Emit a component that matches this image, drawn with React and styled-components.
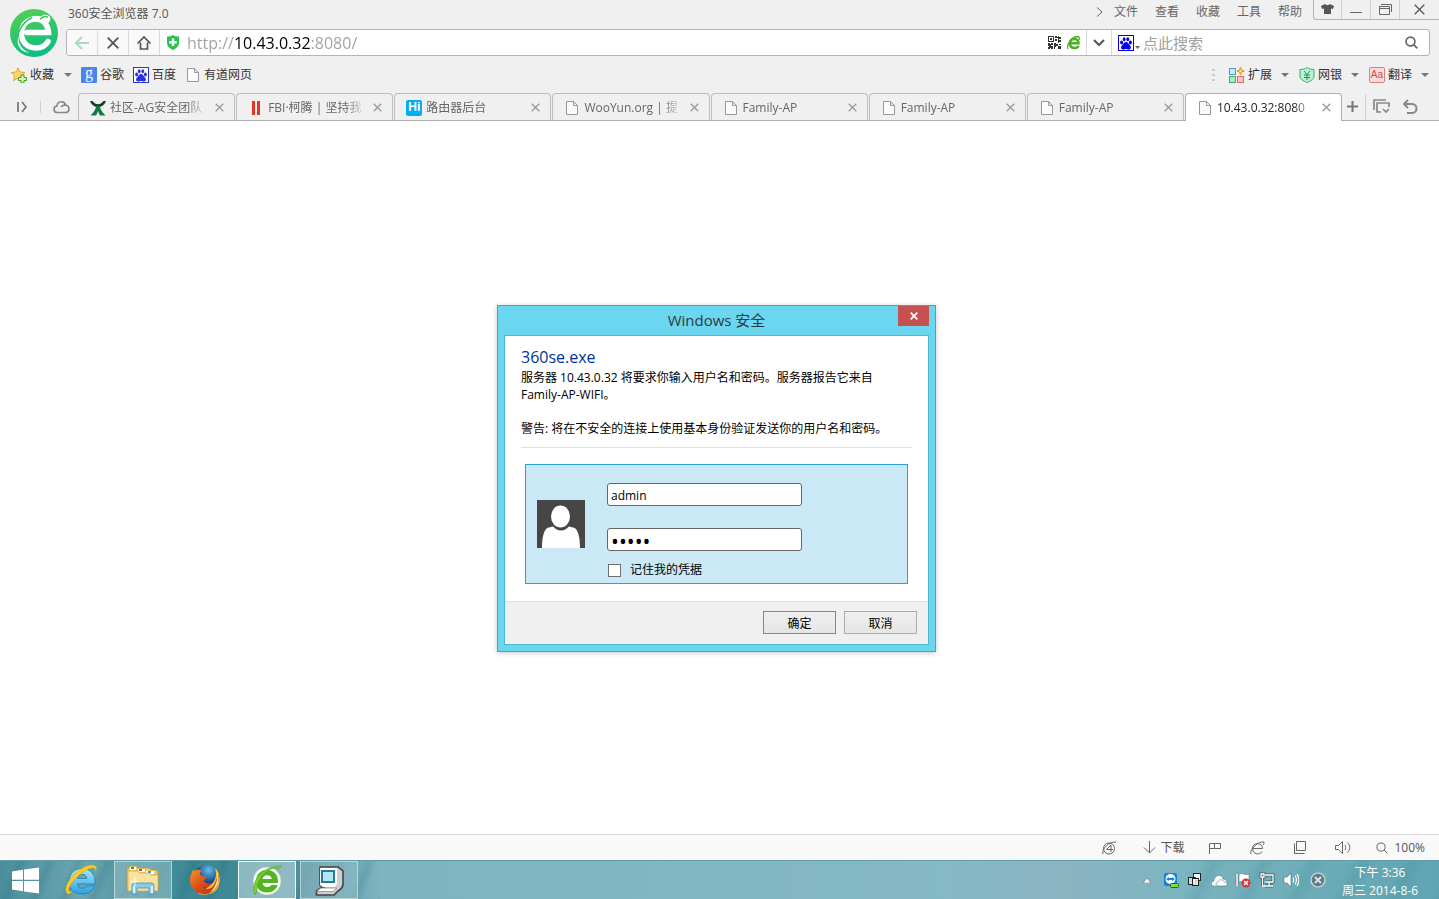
import React from "react";
import styled, { createGlobalStyle, css } from "styled-components";

const GlobalStyle = createGlobalStyle`
  *, *::before, *::after { box-sizing: border-box; }
  body {
    margin: 0;
    background: #fff;
    color: #000;
    font: 12px/16px "Open Sans", "Noto Sans CJK SC", sans-serif;
  }
  button, input {
    margin: 0;
    padding: 0;
    border: 0;
    background: none;
    color: inherit;
    font: inherit;
  }
  a { color: inherit; text-decoration: none; }
  svg { display: block; flex: none; }
`;

const Window = styled.div`
  display: flex;
  flex-direction: column;
  min-height: 100vh;
`;

/* ---------- browser header ---------- */

const Header = styled.header`
  background: #f0f0f0;
  color: #555;
`;

const HeaderTop = styled.div`
  display: flex;
`;

const LogoButton = styled.button`
  flex: none;
  width: 66px;
  height: 56px;
  padding: 9px 0 0 10px;
`;

const HeaderMain = styled.div`
  flex: 1;
  min-width: 0;
`;

const TitleRow = styled.div`
  display: flex;
  align-items: flex-start;
  height: 29px;
`;

const AppTitle = styled.span`
  flex: 1;
  padding: 6px 2px 0;
`;

const MenuBar = styled.nav`
  display: flex;
  align-items: center;
  gap: 17px;
  height: 24px;
  padding-right: 11px;
  color: #666;
`;

const MoreButton = styled.button`
  margin-right: -6px;
`;

const WindowButtons = styled.div`
  display: flex;
  height: 20px;
  border: 1px solid #b4b4b4;
  border-width: 0 0 1px 1px;
  border-radius: 0 0 0 3px;
`;

const WindowButton = styled.button`
  display: grid;
  place-items: center;
  width: ${(p) => p.$width}px;
  border-right: 1px solid #d0d0d0;
  &:last-child { border-right: 0; }
`;

const AddressBar = styled.div`
  display: flex;
  height: 27px;
  margin-right: 9px;
  overflow: hidden;
  background: #fff;
  border: 1px solid #b4b4b4;
  border-radius: 3px;
`;

const NavButton = styled.button`
  display: grid;
  place-items: center;
  width: 31px;
  background: #f9f9f9;
  border-right: 1px solid #dadada;
`;

const AddressField = styled.label`
  display: flex;
  flex: 1;
  align-items: center;
  gap: 7px;
  min-width: 0;
  padding-left: 6px;
`;

const AddressInput = styled.input`
  flex: 1;
  min-width: 0;
  height: 25px;
  font-size: 16px;
  outline: none;
  color: transparent;
  background: linear-gradient(90deg, #a0a0a0 47px, #000 47px, #000 123px, #a0a0a0 123px);
  background-clip: text;
  -webkit-background-clip: text;
`;

const AddressTools = styled.div`
  display: flex;
  align-items: center;
  gap: 6px;
  padding-right: 5px;
`;

const DropButton = styled.button`
  display: grid;
  place-items: center;
  width: 26px;
  border: 1px solid #dadada;
  border-width: 0 1px;
`;

const SearchBox = styled.form`
  display: flex;
  align-items: center;
  width: 317px;
  padding: 0 11px 0 6px;
`;

const SearchInput = styled.input`
  flex: 1;
  min-width: 0;
  height: 25px;
  padding-left: 3px;
  font-size: 15px;
  outline: none;
  &::placeholder { color: #a0a0a0; opacity: 1; }
`;

const Bookmarks = styled.nav`
  display: flex;
  align-items: center;
  height: 37px;
  padding: 0 10px 0 11px;
  color: #333;
`;

const Bookmark = styled.a`
  display: flex;
  align-items: center;
  gap: 3px;
  margin-right: 9px;
`;

const Grip = styled.span`
  margin-right: 3px;
`;

const Extension = styled.button`
  display: flex;
  align-items: center;
  gap: 3px;
  margin-left: 10px;
`;

const CaretBox = styled.span`
  margin-left: ${(p) => p.$gap || 6}px;
`;

const Spacer = styled.span`
  flex: 1;
`;

const TabRow = styled.div`
  display: flex;
  height: 28px;
  border-bottom: 1px solid #adadad;
`;

const TabRowTools = styled.div`
  display: flex;
  align-items: center;
  flex: none;
  width: ${(p) => p.$width}px;
  padding-left: ${(p) => p.$inset}px;
  gap: ${(p) => p.$gap}px;
`;

const Divider = styled.span`
  width: 1px;
  height: ${(p) => p.$height}px;
  background: #d0d0d0;
`;

const TabList = styled.div`
  display: flex;
  flex: 1;
  gap: 1px;
  min-width: 0;
`;

const Tab = styled.div`
  display: flex;
  flex: 1;
  align-items: center;
  min-width: 0;
  padding: 1px 9px 0 11px;
  border: 1px solid #bdbdbd;
  border-bottom: 0;
  border-radius: 4px 4px 0 0;
  color: #666;
  ${(p) => p.$active && css`
    margin-bottom: -1px;
    padding-bottom: 1px;
    background: #fff;
    border-color: #adadad;
    color: #222;
  `}
`;

const TabButton = styled.button`
  display: flex;
  flex: 1;
  align-items: center;
  gap: 4px;
  min-width: 0;
  height: 26px;
`;

const TabIcon = styled.span`
  display: grid;
  place-items: center;
  flex: none;
  width: 16px;
  height: 16px;
`;

const TabText = styled.span`
  flex: 1;
  overflow: hidden;
  text-align: left;
  white-space: nowrap;
  mask-image: linear-gradient(90deg, #000 80%, rgba(0, 0, 0, 0.15));
`;

const TabClose = styled.button`
  display: grid;
  place-items: center;
  width: 11px;
  height: 16px;
  margin-left: 9px;
`;

const HiIcon = styled.span`
  display: block;
  width: 16px;
  height: 16px;
  border-radius: 2px;
  background: #00aff0;
  color: #fff;
  font: bold 12px/15px "Liberation Sans", sans-serif;
  text-align: center;
`;

const GoogleIcon = styled.span`
  display: block;
  width: 16px;
  height: 16px;
  border-radius: 1px;
  background: #4a84ee;
  color: #fff;
  font: 16px/12px "Liberation Serif", serif;
  text-align: center;
`;

const AaIcon = styled.span`
  display: block;
  width: 16px;
  height: 16px;
  border: 1px solid #d88080;
  border-radius: 2px;
  background: #fbdcdc;
  color: #d04848;
  font: 10px/14px "Liberation Sans", sans-serif;
  text-align: center;
`;

/* ---------- page and dialog ---------- */

const Page = styled.main`
  display: grid;
  flex: 1;
  place-items: center;
  padding: 2px 6px 0 0;
  background: #fff;
`;

const Dialog = styled.section`
  width: 439px;
  padding: 0 6px 6px;
  background: #6ad6ef;
  border: 1px solid #48a5b8;
  box-shadow: 0 1px 5px rgba(0, 0, 0, 0.22);
`;

const DialogTitleBar = styled.div`
  display: grid;
  grid-template-columns: 31px 1fr 31px;
  height: 29px;
`;

const DialogTitle = styled.h1`
  grid-column: 2;
  margin: 0;
  color: #2b3c40;
  font-size: 15px;
  font-weight: 400;
  line-height: 29px;
  text-align: center;
`;

const DialogClose = styled.button`
  display: grid;
  place-items: center;
  height: 20px;
  background: #c75050;
`;

const DialogForm = styled.form`
  background: #fff;
  border: 1px solid #52b5c8;
`;

const DialogBody = styled.div`
  padding: 10px 16px 17px;
`;

const AppName = styled.h2`
  margin: 0 0 1px;
  color: #003399;
  font-size: 16px;
  font-weight: 400;
  line-height: 22px;
`;

const Message = styled.p`
  margin: 0 0 17px;
  line-height: 17px;
`;

const Credentials = styled.div`
  display: flex;
  gap: 22px;
  margin: 16px 4px 0;
  padding: 18px 11px 5px;
  background: #cbe8f6;
  border: 1px solid #26a0da;
`;

const Rule = styled.hr`
  height: 1px;
  margin: -7px 0 0;
  border: 0;
  background: #dfdfdf;
`;

const AvatarBox = styled.div`
  padding-top: 17px;
`;

const Fields = styled.div`
  display: flex;
  flex-direction: column;
`;

const TextField = styled.input`
  width: 195px;
  height: 23px;
  margin-bottom: ${(p) => p.$after}px;
  padding: 2px 3px 0;
  background: #fff;
  border: 1px solid #666;
  border-radius: 3px;
  outline: none;
  &[type="password"] { font-size: 21px; }
`;

const Remember = styled.label`
  display: flex;
  align-items: center;
  gap: 9px;
  padding-left: 1px;
`;

const CheckBox = styled.input`
  appearance: none;
  width: 13px;
  height: 13px;
  background: #fff;
  border: 1px solid #707070;
`;

const DialogFooter = styled.div`
  display: flex;
  justify-content: flex-end;
  gap: 8px;
  padding: 9px 11px 10px;
  background: #f0f0f0;
  border-top: 1px solid #dfdfdf;
`;

const DialogButton = styled.button`
  width: 73px;
  height: 23px;
  padding-top: 2px;
  background: linear-gradient(#f0f0f0, #e5e5e5);
  border: 1px solid ${(p) => (p.$primary ? "#3399ff" : "#acacac")};
`;

/* ---------- status bar and task bar ---------- */

const StatusBar = styled.footer`
  display: flex;
  align-items: center;
  justify-content: flex-end;
  height: 26px;
  padding-right: 14px;
  background: #f9f9f9;
  border-top: 1px solid #dadada;
  color: #555;
`;

const StatusItem = styled.button`
  display: flex;
  align-items: center;
  gap: 4px;
  margin-left: ${(p) => p.$gap || 28}px;
`;

const TaskBar = styled.footer`
  display: flex;
  align-items: stretch;
  height: 39px;
  border-top: 1px solid #5f9ba8;
  color: #fff;
  background:
    repeating-linear-gradient(112deg, transparent 0 12px, rgba(20, 85, 98, 0.14) 19px, transparent 27px) 0 0 / 380px 100% no-repeat,
    repeating-linear-gradient(118deg, transparent 0 20px, rgba(35, 120, 135, 0.14) 32px, transparent 44px) 100% 0 / 260px 100% no-repeat,
    linear-gradient(90deg, #4a8e9b 0, #6aa5b1 80px, #3b8794 190px, #3f8996 230px, #528f9d 300px, #7db4c0 380px, #84b9c5 66%, #8cb4c3 74%, #7cb4bf 82%, #5fa5b2);
`;

const TaskButton = styled.button`
  display: grid;
  place-items: center;
  width: ${(p) => p.$width || 58}px;
  margin-right: ${(p) => p.$after || 0}px;
  ${(p) => p.$open && css`
    background: rgba(150, 192, 201, 0.55);
    border: 1px solid rgba(210, 232, 236, 0.65);
  `}
  ${(p) => p.$current && css`
    background: rgba(185, 215, 221, 0.62);
    border-color: #f4fbfc;
  `}
`;

const Tray = styled.div`
  display: flex;
  align-items: center;
  margin-left: auto;
`;

const TrayButton = styled.button`
  display: grid;
  place-items: center;
  width: 24px;
  height: 24px;
  margin-left: ${(p) => p.$gap || 0}px;
`;

const Clock = styled.time`
  width: 100px;
  margin-right: 9px;
  padding-top: 3px;
  line-height: 18px;
  text-align: center;
`;

const ClockLine = styled.span`
  display: block;
`;

/* ---------- icons ---------- */

const Icon = ({ w = 16, h = w, stroke = "#666", sw = 1, children }) => (
  <svg width={w} height={h} viewBox={`0 0 ${w} ${h}`} fill="none" stroke={stroke} strokeWidth={sw} aria-hidden="true">
    {children}
  </svg>
);

const Caret = () => (
  <Icon w={8} h={4} stroke="none"><path d="M0 0h8L4 4z" fill="#777" /></Icon>
);

const LogoIcon = () => (
  <Icon w={48} stroke="none">
    <defs>
      <linearGradient id="logo" x1="0.3" y1="0" x2="0.6" y2="1">
        <stop offset="0" stopColor="#52cf52" />
        <stop offset="1" stopColor="#0bbd8b" />
      </linearGradient>
    </defs>
    <circle cx="24" cy="24" r="24" fill="url(#logo)" />
    <path d="M17 23.500h21.500C38 15 32.500 10 26 10c-9 0-14.500 6-14.500 14.500S17 39 26 39c5.500 0 9.500-2 12-6.500" stroke="#fff" strokeWidth="5.500" strokeLinecap="round" />
    <path d="M14 13C19 7 26 5.500 31 7.500c2-2.500 7-2.500 9 .5 1 2 0 4-1.500 6-4-4-9-5.500-13-5-4 .3-8 1.500-11.500 4z" fill="#fff" />
    <path d="M8 38C5 26 11 14 22 8.500" stroke="#2cc766" strokeWidth="1.500" />
    <path d="M30 10.500c2-2.500 5-3.500 8-2.500" stroke="#3cc85c" strokeWidth="1.500" />
    <path d="M8.500 27c-.5 8 3 14 11 16.500C11 43.500 5.500 36 8.500 27z" fill="#fff" />
  </Icon>
);

const PageIcon = () => (
  <Icon w={12} h={14} stroke="#999"><path d="M.5.5h7l4 4v9H.5zM7.500.5v4h4" fill="#fbfbfb" /></Icon>
);

const PawIcon = ({ color = "#2932e1" }) => (
  <Icon stroke="none">
    <rect width="16" height="16" fill={color} />
    <rect x="1" y="1" width="14" height="14" fill="#fff" />
    <g fill={color}>
      <ellipse cx="3.600" cy="7.500" rx="1.500" ry="2" />
      <ellipse cx="6.200" cy="4.300" rx="1.400" ry="2" />
      <ellipse cx="9.800" cy="4.300" rx="1.400" ry="2" />
      <ellipse cx="12.400" cy="7.500" rx="1.500" ry="2" />
      <path d="M8 7c2 0 2.500 2 4 3.500s1 4-1 4-2-.5-3-.5-1 .5-3 .5-2.500-2.500-1-4S6 7 8 7z" />
    </g>
  </Icon>
);

const StarIcon = () => (
  <Icon stroke="none">
    <path d="M7 .8l2 4.200 5 .6-3.600 3.300 1 4.600L7 11.200l-4.300 2.300.9-4.600L.4 5.600l4.700-.6z" fill="#ffd968" stroke="#e0a53e" />
    <path d="M10 8h3v2.500h2.500v3H13V16h-3v-2.500H7.500v-3H10z" fill="#d9f5bd" stroke="#3f9d1e" />
  </Icon>
);

const ShieldPlus = () => (
  <Icon w={14} h={15} stroke="none">
    <path d="M1 1.500c2 .3 4-.2 6-1.500 2 1.300 4 1.800 6 1.500V8c0 3-3 5.500-6 7-3-1.500-6-4-6-7z" fill="#2bc253" />
    <path d="M5.800 3.500h2.400V6h2.500v2.400H8.200v2.500H5.800V8.400H3.300V6h2.500z" fill="#fff" />
  </Icon>
);

const QrIcon = () => (
  <Icon w={13} stroke="none">
    <path fillRule="evenodd" fill="#333" d="M0 0h6v6H0zM1 1v4h4V1zM2 2h2v2H2zM7 0h2v2H7zM10 0h1v1h2v2h-2v1h-1V2h-1V1h1zM7 3h2v2H7zM10 4h3v2h-2v1h-1zM0 7h2v1h1V7h2v2H3v1h2v3H3v-1H2v1H0v-2h1v-1H0zM6 7h2v1h2v2H8v1H7v2H6zM11 8h2v1h-2zM10 10h3v3h-3z" />
  </Icon>
);

const GreenE = () => (
  <Icon w={14} h={15} stroke="#4caf27">
    <path d="M3.500 8.300h8C11.500 5.500 9.800 4 7.500 4 4.800 4 3 5.800 3 8.500S4.800 13 7.500 13c1.800 0 3.300-.7 4-2.300" strokeWidth="2.600" />
    <path d="M1 14C-1 9 5 2 10 1.500c2.500 0 3 1.500 2 3.500" strokeWidth="1.300" />
  </Icon>
);

const AgIcon = () => (
  <Icon stroke="none">
    <path d="M0 1h2.500C4 3 6 4.300 8 4.300S12 3 13.500 1H16c-1.500 4-4.500 6-8 6S1.500 5 0 1z" fill="#133c30" />
    <path d="M6 6h4c0 3 2 6 5.500 9.500H10C9 14 8.500 12.500 8 11c-.5 1.500-1 3-2 4.500H.5C4 12 6 9 6 6z" fill="#147a43" />
  </Icon>
);

const BarsIcon = () => (
  <Icon stroke="none"><path d="M4 1h3v14H4zM9 1h3v14H9z" fill="#e83428" /></Icon>
);

const ExtIcon = () => (
  <Icon>
    <rect x=".5" y="1.500" width="6" height="6" fill="#cceaff" stroke="#4c9acb" />
    <rect x=".5" y="9.500" width="6" height="6" fill="#a8eebe" stroke="#42ab69" />
    <rect x="8.500" y="9.500" width="6" height="6" fill="#ffc2c2" stroke="#df6a6a" />
    <path d="M11.500 .5l1 2.500 2.700 1-2.700 1-1 2.700-1-2.700L8 4l2.500-1z" fill="#ffe65a" stroke="#e5891e" />
  </Icon>
);

const BankIcon = () => (
  <Icon stroke="#3fab72">
    <path d="M1 2.500c3 0 5-.5 7-2 2 1.500 4 2 7 2V9c0 3-3 5-7 6.500C4 14 1 12 1 9z" fill="#b8f3d2" />
    <path d="M5 4l3 3.500L11 4M8 7.500V13M5 8h6M5 10.500h6" stroke="#21915a" />
  </Icon>
);

const CloseX = ({ size = 9, color = "#999", sw = 1.3 }) => (
  <Icon w={size} stroke={color} sw={sw}><path d={`M.7.7l${size - 1.4} ${size - 1.4}M${size - 0.7}.7L.7 ${size - 0.7}`} /></Icon>
);

const Magnifier = ({ sw = 1.7, size = 13 }) => (
  <Icon w={size} sw={sw}><circle cx={size * 0.42} cy={size * 0.42} r={size * 0.34} /><path d={`M${size * 0.67} ${size * 0.67}L${size - 0.7} ${size - 0.7}`} /></Icon>
);

const WindowsLogo = () => (
  <Icon w={28} h={27} stroke="none">
    <path d="M1 4.500l11-1.700v10H1zM13 2.500L28 .5v12.300H13zM1 14h11v10.200L1 22.500zM13 14h15v12.500l-15-2z" fill="#fff" />
  </Icon>
);

const IeIcon = () => (
  <Icon w={32} stroke="none">
    <defs>
      <linearGradient id="ie" x2="0" y2="1"><stop stopColor="#a8e9fc" /><stop offset="1" stopColor="#27a0e2" /></linearGradient>
    </defs>
    <path fillRule="evenodd" fill="url(#ie)" stroke="#237fb4" strokeWidth=".8" d="M4 17.500C4 9.500 9.500 4.500 17 4.500S30 10 30 17v3H12.500c.3 2.500 2.200 4.200 5 4.200 2 0 3.500-.7 4.500-2.200h7.500c-2 5.500-6.500 8-12.500 8C9 30 4 25.500 4 17.500zM12.500 14.500h9.300c-.3-2.700-2-4.200-4.600-4.200s-4.400 1.500-4.700 4.200z" />
    <path d="M3 30C-3 26 4 14 13 7 21 1 29-1 31 3c.7 1.500.3 3-.5 4.500.3-4-3-4.500-7-2.500C15 9 6 18 4 24c-1 3.500.500 4.500 3.500 3C6 29 4.500 30.500 3 30z" fill="#fccc1f" stroke="#d99b13" strokeWidth=".5" />
  </Icon>
);

const FolderIcon = () => (
  <Icon w={34} h={30} stroke="none">
    <path d="M1 3h2V1h8l1 2h12l1 2h6l1 2v18H1z" fill="#e7c967" stroke="#b99a40" strokeWidth=".7" />
    <path d="M4 2h6v3H4zM12 4h7v3h-7zM20 6h8v3h-8z" fill="#fff" />
    <path d="M5 2h3v2H5z" fill="#17a435" /><path d="M13 4h3v2h-3z" fill="#df4522" /><path d="M22 6h3v2h-3z" fill="#3499dd" />
    <path d="M2 6h10l2 2h9l2 2h7v16H2z" fill="#f7e39b" stroke="#c9a84c" strokeWidth=".7" />
    <path d="M6 29V19.500l2-1.500h18l2 1.500V29h-5v-6H11v6z" fill="#8cc9eb" stroke="#4c92c0" strokeWidth=".8" />
    <path d="M7 28v-7h2v7zM25 28v-7h2v7z" fill="#d9f2ff" />
    <path d="M9 12v9M5 16.500h8" stroke="#fff" opacity=".9" />
  </Icon>
);

const FirefoxIcon = () => (
  <Icon w={32} stroke="none">
    <defs>
      <linearGradient id="fox" x2="1" y2="1"><stop stopColor="#f79622" /><stop offset=".5" stopColor="#dc4b18" /><stop offset="1" stopColor="#b92e16" /></linearGradient>
      <radialGradient id="globe" cx=".6" cy=".2"><stop stopColor="#5fc0ea" /><stop offset="1" stopColor="#123f85" /></radialGradient>
    </defs>
    <circle cx="17" cy="14" r="13" fill="url(#globe)" />
    <path d="M26 4c7 6 6 19-1 24-6 4-16 2-16 2l10-7c6-4 10-10 7-19z" fill="#f8bb29" />
    <path d="M4 5c0 2 1 2 1 2 3-2 5-1 8-1-2 2-3 4-1 6 2 1 5-1 6 2-1 1-3 1-3 3 1 2 4 3 7 2-1 4-5 6-9 4 5 4 12 2 14-7l3-6c1 10-4 19-13 20C8 31 1 24 1 16 1 11 3 9 4 5z" fill="url(#fox)" />
    <path d="M28 8c4 9 0 17-7 20 6-5 8-12 7-20z" fill="#fff09a" />
  </Icon>
);

const Se360Icon = () => (
  <Icon w={32} stroke="none">
    <circle cx="16" cy="17" r="14" fill="#f7fcf4" stroke="#9cc3a4" strokeWidth=".5" />
    <path fillRule="evenodd" fill="#55b424" d="M5 17.500C5 10.500 9.500 6 16 6s11 4.500 11 11v2H11.500c.3 2.500 2.200 4 4.800 4 1.800 0 3.200-.7 4.200-2h6.200c-1.700 4.800-5.500 7.500-10.700 7.500C9.500 28.500 5 24.500 5 17.500zM11.500 15h9.300c-.3-2.500-2-3.800-4.600-3.800S11.800 12.500 11.500 15z" />
    <path d="M4 31C-1 19 10 2 30 2c-1 1-2 3-3 4 0-2.500-5-2-8-.5C11 9 6 18 6 25c0 2.500-1 4.500-2 6z" fill="#7bd138" stroke="#4da522" strokeWidth=".6" />
  </Icon>
);

const ComputerIcon = () => (
  <Icon w={31} h={31} stroke="#444" sw={1.6}>
    <path d="M6 2h18l5 4v14c-1 4-3 5-5 6l-4 4H2.500v-4l4-3H10l-4-3z" fill="#cfcfcf" />
    <path d="M6 3h17v16l-2 3H9l-3-2z" fill="#fff" stroke="none" />
    <rect x="8" y="6" width="12" height="11" fill="#b5e7ee" stroke="#247c99" strokeWidth="2" />
    <path d="M3 26l4-3h16l-4 3.500H3z" fill="#fff" stroke="#888" strokeWidth=".8" />
  </Icon>
);

const AvatarIcon = () => (
  <Icon w={48} stroke="none">
    <path d="M0 0h48v48H0z" fill="#464646" />
    <path d="M5 48c0-8 1-15 4-19 2-2 6-2 9-3h12c3 1 7 1 9 3 3 4 4 11 4 19z" fill="#fff" />
    <ellipse cx="24" cy="17" rx="11" ry="13.500" fill="#464646" />
    <ellipse cx="23.500" cy="16.500" rx="9.500" ry="11" fill="#fff" />
  </Icon>
);

const tabs = [
  { title: "社区-AG安全团队", icon: <AgIcon /> },
  { title: "FBI·柯腾 | 坚持我", icon: <BarsIcon /> },
  { title: "路由器后台", icon: <HiIcon>Hi</HiIcon> },
  { title: "WooYun.org | 提", icon: <PageIcon /> },
  { title: "Family-AP", icon: <PageIcon /> },
  { title: "Family-AP", icon: <PageIcon /> },
  { title: "Family-AP", icon: <PageIcon /> },
  { title: "10.43.0.32:8080", icon: <PageIcon />, active: true },
];

const menus = ["文件", "查看", "收藏", "工具", "帮助"];

function BrowserHeader() {
  return (
    <Header>
      <HeaderTop>
        <LogoButton aria-label="360"><LogoIcon /></LogoButton>
        <HeaderMain>
          <TitleRow>
            <AppTitle>360安全浏览器 7.0</AppTitle>
            <MenuBar>
              <MoreButton aria-label="更多"><Icon w={7} h={10}><path d="M1 .5L6 5 1 9.500" /></Icon></MoreButton>
              {menus.map((m) => <button key={m}>{m}</button>)}
            </MenuBar>
            <WindowButtons>
              <WindowButton $width={28} aria-label="皮肤">
                <Icon w={13} h={11} stroke="none"><path d="M4 0c1 1.500 4 1.500 5 0l4 2-1 3-2-.5V10H3V4.500L1 5 0 2z" fill="#555" /></Icon>
              </WindowButton>
              <WindowButton $width={29} aria-label="最小化"><Icon w={12} h={10}><path d="M0 7.500h12" /></Icon></WindowButton>
              <WindowButton $width={29} aria-label="还原">
                <Icon w={13} h={11}><path d="M.5 2.500h10v8H.5zM.5 4.500h10M2 .5h10.500V8" /></Icon>
              </WindowButton>
              <WindowButton $width={39} aria-label="关闭"><CloseX size={11} color="#555" /></WindowButton>
            </WindowButtons>
          </TitleRow>
          <AddressBar>
            <NavButton aria-label="后退"><Icon stroke="#a5dcb9" sw={2}><path d="M15 8H2M8 2L2 8l6 6" /></Icon></NavButton>
            <NavButton aria-label="停止"><CloseX size={12} color="#555" sw={1.8} /></NavButton>
            <NavButton aria-label="主页"><Icon stroke="#555" sw={1.7}><path d="M1.500 8.500L8 2l6.500 6.500M4.500 7.500V14h7V7.500" /></Icon></NavButton>
            <AddressField>
              <ShieldPlus />
              <AddressInput aria-label="地址" defaultValue="http://10.43.0.32:8080/" />
            </AddressField>
            <AddressTools><QrIcon /><GreenE /></AddressTools>
            <DropButton aria-label="展开地址"><Icon w={12} h={8} stroke="#555" sw={2}><path d="M1 1l5 5 5-5" /></Icon></DropButton>
            <SearchBox role="search">
              <PawIcon color="#0000f0" />
              <Icon w={6} h={12} stroke="none"><path d="M1 9h5L3.500 12z" fill="#666" /></Icon>
              <SearchInput aria-label="搜索" placeholder="点此搜索" />
              <button type="button" aria-label="开始搜索"><Magnifier /></button>
            </SearchBox>
          </AddressBar>
        </HeaderMain>
      </HeaderTop>
      <Bookmarks>
        <Bookmark href="#favorites"><StarIcon />收藏<CaretBox $gap={7}><Caret /></CaretBox></Bookmark>
        <Bookmark href="#google"><GoogleIcon>g</GoogleIcon>谷歌</Bookmark>
        <Bookmark href="#baidu"><PawIcon />百度</Bookmark>
        <Bookmark href="#youdao"><TabIcon><PageIcon /></TabIcon>有道网页</Bookmark>
        <Spacer />
        <Grip><Icon w={4} h={14} stroke="none"><path d="M0 1h3v2H0zM0 6h3v2H0zM0 11h3v2H0z" fill="#ccc" /></Icon></Grip>
        <Extension><ExtIcon />扩展<CaretBox><Caret /></CaretBox></Extension>
        <Extension><BankIcon />网银<CaretBox><Caret /></CaretBox></Extension>
        <Extension><AaIcon>Aa</AaIcon>翻译<CaretBox><Caret /></CaretBox></Extension>
      </Bookmarks>
      <TabRow>
        <TabRowTools $width={78} $inset={16} $gap={12}>
          <button aria-label="侧边栏"><Icon w={12} h={12} sw={1.7} stroke="#777"><path d="M2 1v10M6 1l4 5-4 5" /></Icon></button>
          <Divider $height={12} />
          <button aria-label="云同步"><Icon w={17} h={14} sw={1.7} stroke="#888"><path d="M4.500 12.500C0 12.500 0 6.500 4 6c.3-5.500 7.500-5.500 8.500-1 4.500.5 4.500 7.500 0 7.500zM8 7c1-1.500 2.500-2 4.500-2" /></Icon></button>
        </TabRowTools>
        <TabList>
          {tabs.map((t, i) => (
            <Tab key={i} $active={t.active}>
              <TabButton><TabIcon>{t.icon}</TabIcon><TabText>{t.title}</TabText></TabButton>
              <TabClose aria-label="关闭标签"><CloseX /></TabClose>
            </Tab>
          ))}
        </TabList>
        <TabRowTools $width={97} $inset={5} $gap={7}>
          <button aria-label="新标签"><Icon w={11} sw={2} stroke="#777"><path d="M5.500 0v11M0 5.500h11" /></Icon></button>
          <Divider $height={26} />
          <button aria-label="标签列表"><Icon w={17} h={15} sw={1.7} stroke="#888"><path d="M1 11V1h12M8 13H4V4h12v4M10 10l3 3 3-3" /></Icon></button>
          <button aria-label="撤销关闭"><Icon w={26} h={15} sw={2} stroke="#888"><path d="M7 5h8c6 0 6 9 0 9h-5M11 1L7 5l4 4" /></Icon></button>
        </TabRowTools>
      </TabRow>
    </Header>
  );
}

function SecurityDialog() {
  return (
    <Dialog role="dialog" aria-labelledby="dialog-title">
      <DialogTitleBar>
        <DialogTitle id="dialog-title">Windows 安全</DialogTitle>
        <DialogClose aria-label="关闭"><CloseX size={8} color="#fff" sw={1.7} /></DialogClose>
      </DialogTitleBar>
      <DialogForm onSubmit={(e) => e.preventDefault()}>
        <DialogBody>
          <AppName>360se.exe</AppName>
          <Message>服务器 10.43.0.32 将要求你输入用户名和密码。服务器报告它来自 Family-AP-WIFI。</Message>
          <Message>警告: 将在不安全的连接上使用基本身份验证发送你的用户名和密码。</Message>
          <Rule />
          <Credentials>
            <AvatarBox><AvatarIcon /></AvatarBox>
            <Fields>
              <TextField $after={22} aria-label="用户名" defaultValue="admin" />
              <TextField $after={11} aria-label="密码" type="password" defaultValue="admin" />
              <Remember><CheckBox type="checkbox" />记住我的凭据</Remember>
            </Fields>
          </Credentials>
        </DialogBody>
        <DialogFooter>
          <DialogButton $primary type="submit">确定</DialogButton>
          <DialogButton type="button">取消</DialogButton>
        </DialogFooter>
      </DialogForm>
    </Dialog>
  );
}

function BrowserStatus() {
  return (
    <StatusBar>
      <StatusItem aria-label="加速">
        <Icon w={15} h={14}><circle cx="7" cy="7.500" r="5.500" /><path d="M1 13C-1 8 8 0 14 1M9 11V4L4.500 8.500H11" /></Icon>
      </StatusItem>
      <StatusItem $gap={26}><Icon w={13} h={13}><path d="M6.500 0v12M1 6.500L6.500 12 12 6.500" /></Icon>下载</StatusItem>
      <StatusItem $gap={24} aria-label="举报">
        <Icon w={14} h={12}><path d="M1.500 12V1.500h11v5h-6v-5M1.500 6.500h5" /></Icon>
      </StatusItem>
      <StatusItem aria-label="浏览模式">
        <Icon w={15} h={14}><path d="M3 7.500h9.500c0-6.500-10-6.500-10 0 0 6 7.500 7 9.500 3M1 13C-1 9 8 0 14 1c0 1 0 2-1 3" /></Icon>
      </StatusItem>
      <StatusItem aria-label="窗口"><Icon w={14} h={13}><path d="M3.500.5h9v9h-9zM1.500 2.500v10h10" /></Icon></StatusItem>
      <StatusItem aria-label="声音">
        <Icon w={16} h={13}><path d="M.5 4.500h3l4-4v12l-4-4h-3zM10 4c1 2 1 3 0 5M12.500 1.500c3 3 3 7 0 10" /></Icon>
      </StatusItem>
      <StatusItem $gap={25}><Magnifier sw={1} size={12} /><CaretBox $gap={2}>100%</CaretBox></StatusItem>
    </StatusBar>
  );
}

function SystemTaskBar() {
  return (
    <TaskBar>
      <TaskButton $width={50} aria-label="开始"><WindowsLogo /></TaskButton>
      <TaskButton $width={62} $after={2} aria-label="Internet Explorer"><IeIcon /></TaskButton>
      <TaskButton $open $after={4} aria-label="文件资源管理器"><FolderIcon /></TaskButton>
      <TaskButton $after={4} aria-label="Firefox"><FirefoxIcon /></TaskButton>
      <TaskButton $open $current $after={4} aria-label="360安全浏览器"><Se360Icon /></TaskButton>
      <TaskButton $open aria-label="电脑"><ComputerIcon /></TaskButton>
      <Tray>
        <TrayButton aria-label="显示隐藏的图标"><Icon w={8} h={5} stroke="none"><path d="M0 5l4-5 4 5z" fill="#fff" stroke="#456" strokeWidth=".5" /></Icon></TrayButton>
        <TrayButton aria-label="远程协助">
          <Icon stroke="none"><rect x="1" y="1" width="13" height="13" rx="2" fill="#1684df" /><circle cx="7.500" cy="7" r="5" fill="#fff" /><path d="M3 7l3-2v1h3V5l3 2-3 2V8H6v1z" fill="#1684df" /><rect x="7.500" y="11.500" width="8" height="4" rx="1" fill="#83dd45" stroke="#25691d" /></Icon>
        </TrayButton>
        <TrayButton aria-label="窗口">
          <Icon w={14} stroke="#222"><rect x="5.500" y=".5" width="7" height="7" fill="#fff" /><rect x=".5" y="4.500" width="7" height="7" fill="#e5e5e5" fillOpacity=".8" /><rect x="4.500" y="5.500" width="6" height="7" fill="#f8f8f8" fillOpacity=".8" /></Icon>
        </TrayButton>
        <TrayButton aria-label="OneDrive">
          <Icon w={17} h={13} stroke="#587c84" sw={0.6}><path d="M3 12C-1 12 0 7 3 7c0-6 8-8 9-2 5 0 5 7 2 7z" fill="#fff" /><path d="M7 12c-3-1-2-4 0-4 1-3 5-3 6 0 4 0 4 4 1 4z" fill="#fff" /></Icon>
        </TrayButton>
        <TrayButton aria-label="操作中心">
          <Icon stroke="none"><path d="M1 1h2v14H1zM4 2c4-2 5 2 10 0v8c-4 2-6-2-10 0z" fill="#fff" stroke="#4b6870" strokeWidth=".5" /><circle cx="11" cy="11" r="4.500" fill="#d83232" /><path d="M9 9l4 4M13 9l-4 4" stroke="#fff" strokeWidth="1.500" /></Icon>
        </TrayButton>
        <TrayButton aria-label="网络">
          <Icon stroke="#405c64" sw={3}><path d="M6 3h8v7H6M10 10v4M6 14h8M2 2h3v3H2zM3.500 5v9" /><path d="M6 3h8v7H6M10 10v4M6 14h8M2 2h3v3H2zM3.500 5v9H7" stroke="#fff" strokeWidth="1.300" /></Icon>
        </TrayButton>
        <TrayButton aria-label="音量">
          <Icon stroke="#fff" sw={1.2}><path d="M1 5h3l4-4v14l-4-4H1z" fill="#fff" stroke="#4b6870" strokeWidth=".6" /><path d="M10 5.500c1 2 1 3 0 5M12 3.500c2 3 2 6 0 9M14 2c2.500 4 2.500 8 0 12" /></Icon>
        </TrayButton>
        <TrayButton $gap={3} aria-label="已停用">
          <Icon w={16} stroke="#d5e2e5" sw={1.2}><circle cx="8" cy="8" r="7" fill="#5d7d84" /><path d="M5 5l6 6M11 5l-6 6" strokeWidth="2" /></Icon>
        </TrayButton>
        <Clock dateTime="2014-08-06T15:36"><ClockLine>下午 3:36</ClockLine><ClockLine>周三 2014-8-6</ClockLine></Clock>
      </Tray>
    </TaskBar>
  );
}

export default function App() {
  return (
    <Window>
      <GlobalStyle />
      <BrowserHeader />
      <Page><SecurityDialog /></Page>
      <BrowserStatus />
      <SystemTaskBar />
    </Window>
  );
}
